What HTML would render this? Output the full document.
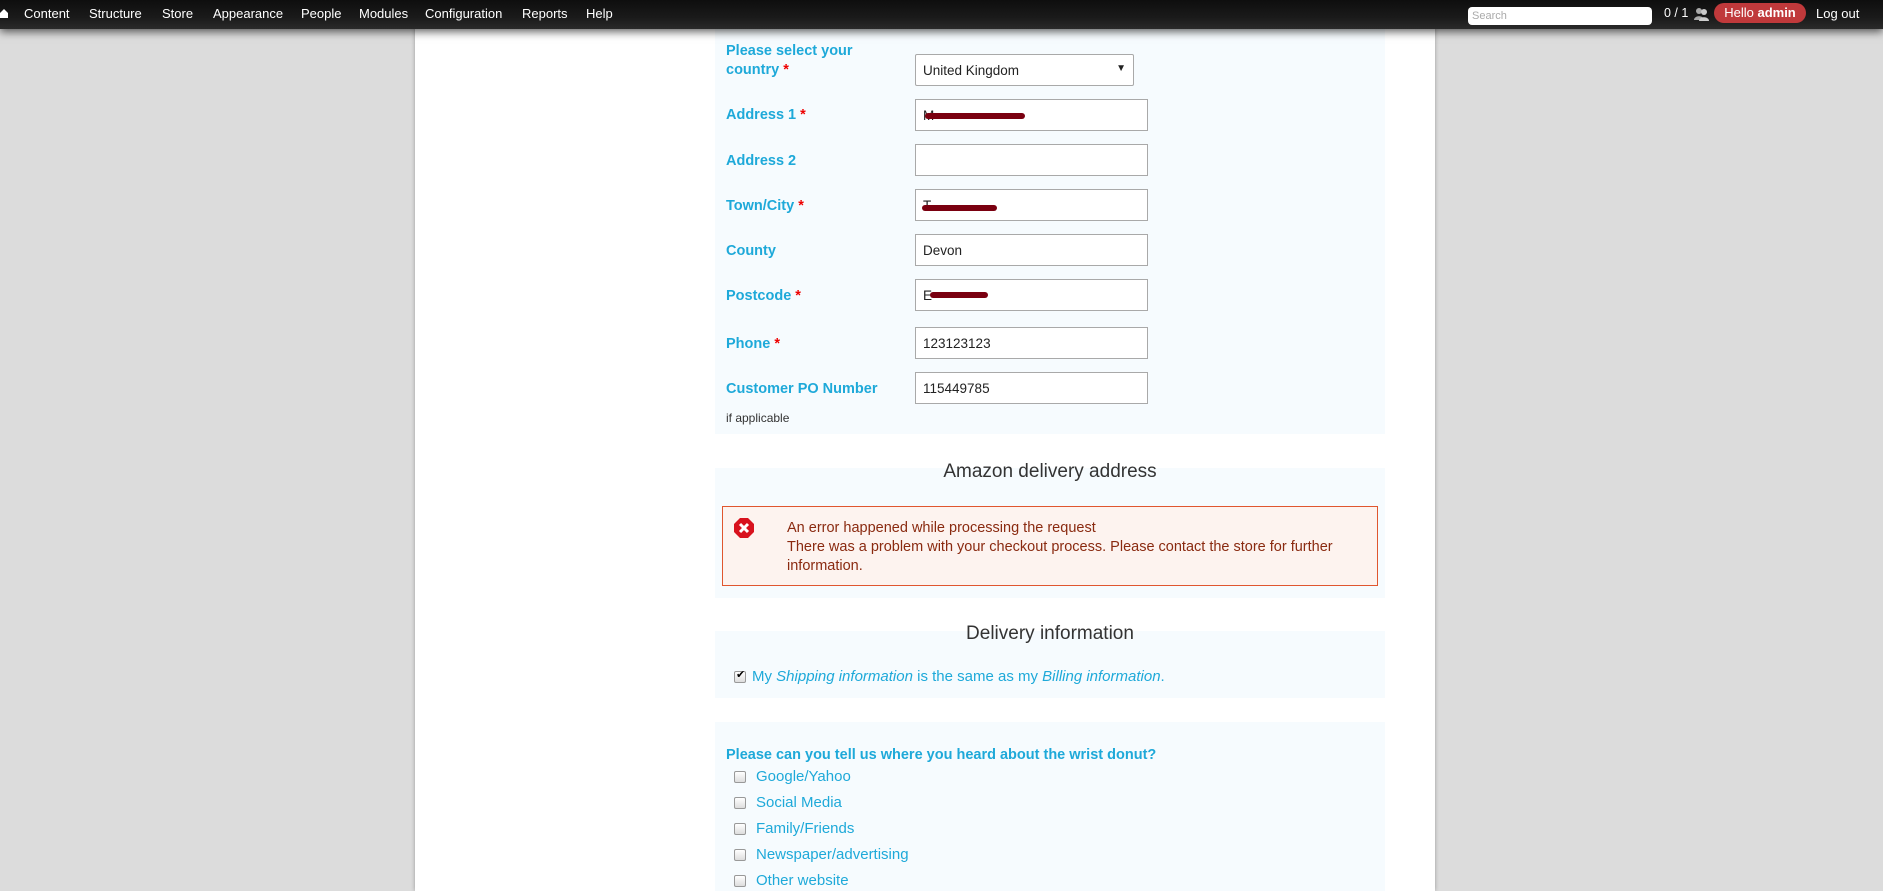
<!DOCTYPE html>
<html><head><meta charset="utf-8"><style>
*{box-sizing:border-box;margin:0;padding:0}
body{width:1883px;height:891px;overflow:hidden;background:#dcdcdc;font-family:"Liberation Sans",Arial,sans-serif;position:relative}
.bar{position:absolute;left:0;top:0;width:1883px;height:29px;background:linear-gradient(#0e0e0e,#1a1a1a 60%,#2a2a2a);z-index:5;box-shadow:0 3px 8px rgba(0,0,0,.6)}
.bar span{position:absolute;top:6px;color:#fff;font-size:13px}
.page{position:absolute;left:415px;top:0;width:1020px;height:891px;background:#fff;box-shadow:0 0 4px rgba(0,0,0,.3)}
.panel{position:absolute;left:715px;width:670px;background:#f6fbfe}
.ab{position:absolute}
.lbl{position:absolute;left:726px;color:#1ea9d9;font-weight:bold;font-size:14.5px;line-height:19px}
.req{color:#e00}
.inp{position:absolute;left:915px;width:233px;height:32px;border:1px solid #a9a9a9;background:#fff;font-size:13.5px;padding:8px 0 0 7px;color:#222}
h2{position:absolute;left:715px;width:670px;text-align:center;font-weight:normal;font-size:19px;color:#333}
.cb{position:absolute;left:734px;width:12px;height:12px;border:1px solid #999;border-radius:2px;background:linear-gradient(#fff,#ddd)}
.opt{position:absolute;left:756px;color:#1ea9d9;font-size:15px}
.scr{position:absolute;height:6px;background:#7a0010;border-radius:3px}
</style></head><body>
<div class="page"></div>
<div class="bar">
<svg class="ab" style="left:0;top:8px" width="8" height="10" viewBox="0 0 8 10"><path d="M0 5L4 1L8 5V10H0Z" fill="#fff"/></svg>
<span style="left:24px">Content</span><span style="left:89px">Structure</span><span style="left:162px">Store</span><span style="left:213px">Appearance</span><span style="left:301px">People</span><span style="left:359px">Modules</span><span style="left:425px">Configuration</span><span style="left:522px">Reports</span><span style="left:586px">Help</span>
<div class="ab" style="left:1468px;top:7px;width:184px;height:18px;background:#fff;border-radius:4px;font-size:11px;color:#aaa;padding:3px 4px">Search</div>
<span style="left:1664px;font-size:12.5px">0 / 1</span>
<svg class="ab" style="left:1694px;top:7px" width="16" height="14" viewBox="0 0 16 14"><circle cx="5" cy="4" r="3" fill="#aaa"/><path d="M0 13C0 8 10 8 10 13Z" fill="#aaa"/><circle cx="10" cy="5" r="3" fill="#ccc"/><path d="M5 14C5 9 15 9 15 14Z" fill="#ccc"/></svg>
<div class="ab" style="left:1714px;top:3px;width:92px;height:20px;background:#c0393b;border-radius:10px;color:#fff;font-size:13px;text-align:center;padding-top:2px">Hello <b>admin</b></div>
<span style="left:1816px">Log out</span>
</div>

<div class="panel" style="top:29px;height:405px"></div>
<div class="lbl" style="top:42px">Please select your<br>country <span class="req">*</span></div>
<div class="inp" style="top:54px;width:219px;border-radius:2px">United Kingdom<span style="position:absolute;right:7px;top:8px;font-size:10px">&#9660;</span></div>
<div class="lbl" style="top:106px">Address 1 <span class="req">*</span></div>
<div class="inp" style="top:99px">M</div><div class="scr" style="left:925px;top:113px;width:100px"></div>
<div class="lbl" style="top:152px">Address 2</div>
<div class="inp" style="top:144px"></div>
<div class="lbl" style="top:197px">Town/City <span class="req">*</span></div>
<div class="inp" style="top:189px">T</div><div class="scr" style="left:922px;top:205px;width:75px"></div>
<div class="lbl" style="top:242px">County</div>
<div class="inp" style="top:234px">Devon</div>
<div class="lbl" style="top:287px">Postcode <span class="req">*</span></div>
<div class="inp" style="top:279px">E</div><div class="scr" style="left:930px;top:292px;width:58px"></div>
<div class="lbl" style="top:335px">Phone <span class="req">*</span></div>
<div class="inp" style="top:327px">123123123</div>
<div class="lbl" style="top:380px">Customer PO Number</div>
<div class="inp" style="top:372px">115449785</div>
<div class="ab" style="left:726px;top:411px;font-size:12px;color:#333">if applicable</div>

<div class="panel" style="top:468px;height:130px"></div>
<h2 style="top:461px">Amazon delivery address</h2>
<div class="ab" style="left:722px;top:506px;width:656px;height:80px;border:1px solid #e0562f;background:#fdf3ef"></div>
<svg class="ab" style="left:734px;top:518px" width="20" height="20" viewBox="0 0 20 20"><polygon points="6,0 14,0 20,6 20,14 14,20 6,20 0,14 0,6" fill="#d8121e"/><path d="M6 6L14 14M14 6L6 14" stroke="#fff" stroke-width="3"/></svg>
<div class="ab" style="left:787px;top:519px;font-size:14.5px;line-height:19px;color:#8a2a10">An error happened while processing the request<br>There was a problem with your checkout process. Please contact the store for further<br>information.</div>

<div class="panel" style="top:631px;height:67px"></div>
<h2 style="top:623px">Delivery information</h2>
<div class="cb" style="top:671px"></div><span class="ab" style="left:736px;top:668px;font-size:11px">&#10004;</span>
<div class="opt" style="top:668px;left:752px">My <i>Shipping information</i> is the same as my <i>Billing information</i>.</div>

<div class="panel" style="top:722px;height:169px"></div>
<div class="lbl" style="top:746px">Please can you tell us where you heard about the wrist donut?</div>
<div class="cb" style="top:771px"></div><div class="opt" style="top:768px">Google/Yahoo</div>
<div class="cb" style="top:797px"></div><div class="opt" style="top:794px">Social Media</div>
<div class="cb" style="top:823px"></div><div class="opt" style="top:820px">Family/Friends</div>
<div class="cb" style="top:849px"></div><div class="opt" style="top:846px">Newspaper/advertising</div>
<div class="cb" style="top:875px"></div><div class="opt" style="top:872px">Other website</div>
</body></html>
